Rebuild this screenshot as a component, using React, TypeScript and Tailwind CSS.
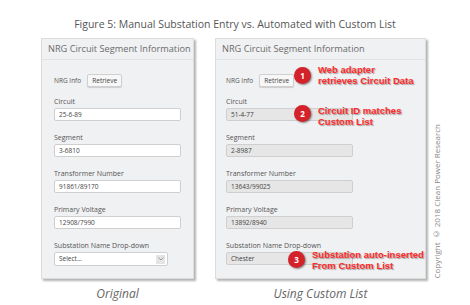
import React from "react";

const font = { fontFamily: '"Open Sans", "Liberation Sans", sans-serif' };

const Field = ({
  label,
  value,
  disabled,
}: {
  label: string;
  value: string;
  disabled?: boolean;
}) => (
  <div>
    <div className="h-[9px] text-[7px] leading-[9px] text-[#555]">{label}</div>
    <div
      className={`mt-[2px] flex h-[13px] w-[127px] items-center rounded-[2px] border border-[#cfcfcf] px-[4px] text-[6.5px] text-[#444] ${
        disabled ? "bg-[#e6e6e6]" : "bg-white"
      }`}
    >
      {value}
    </div>
  </div>
);

const Panel = ({
  width,
  children,
}: {
  width: string;
  children: React.ReactNode;
}) => (
  <div
    className={`relative h-[241px] ${width} border border-[#dcdcdc] bg-[#f0f1f3] shadow-[2px_2px_2px_rgba(0,0,0,0.3)]`}
  >
    <div className="flex h-[21px] items-center whitespace-nowrap border-b border-[#e2e3e5] pl-[6px] text-[9.2px] text-[#6b6b6b]">
      NRG Circuit Segment Information
    </div>
    {children}
  </div>
);

const Badge = ({ n, className }: { n: number; className: string }) => (
  <div
    className={`absolute flex h-[17px] w-[17px] items-center justify-center rounded-full bg-[#d3222a] text-[8px] font-bold text-white shadow-[1px_1px_2px_rgba(0,0,0,0.45)] ${className}`}
  >
    {n}
  </div>
);

const Note = ({ lines, className }: { lines: string[]; className: string }) => (
  <div
    className={`absolute whitespace-nowrap text-[9.5px] font-bold leading-[11px] text-[#ff2a2a] [text-shadow:1px_1px_1px_rgba(0,0,0,0.35)] ${className}`}
    style={{ fontFamily: '"Liberation Sans", Arial, sans-serif' }}
  >
    {lines.map((l) => (
      <div key={l}>{l}</div>
    ))}
  </div>
);

export default function App() {
  return (
    <div className="relative h-[305px] w-[470px] overflow-hidden bg-white" style={font}>
      {/* Title */}
      <div className="pt-[18px] text-center text-[10.5px] leading-[12px] text-[#555]">
        Figure 5: Manual Substation Entry vs. Automated with Custom List
      </div>

      <div className="mt-[8px] flex pl-[41px]">
        {/* Original */}
        <div className="flex flex-col items-center">
          <Panel width="w-[153px]">
            <div className="px-[12px] pt-[14px]">
              <div className="flex items-center gap-[6px]">
                <span className="text-[6.5px] text-[#555]">NRG Info</span>
                <div className="flex h-[13px] items-center rounded-[2px] border border-[#d0d0d0] bg-[#f7f7f7] px-[4px] text-[6.5px] text-[#444] shadow-[0_1px_1px_rgba(0,0,0,0.15)]">
                  Retrieve
                </div>
              </div>
              <div className="mt-[10px] flex flex-col gap-[12px]">
                <Field label="Circuit" value="25-6-89" />
                <Field label="Segment" value="3-6810" />
                <Field label="Transformer Number" value="91861/89170" />
                <Field label="Primary Voltage" value="12908/7990" />
                <div>
                  <div className="h-[9px] text-[7px] leading-[9px] text-[#555]">
                    Substation Name Drop-down
                  </div>
                  <div className="mt-[2px] flex h-[14px] w-[114px] items-center justify-between rounded-[2px] border border-[#cfcfcf] bg-white pl-[4px] pr-[2px] text-[6.5px] text-[#444]">
                    Select...
                    <div className="flex h-[9px] w-[9px] items-center justify-center bg-[#e4e4e4]">
                      <svg width="6" height="4" viewBox="0 0 6 4">
                        <path d="M0.5 0.5 L3 3 L5.5 0.5" fill="none" stroke="#888" strokeWidth="0.8" />
                      </svg>
                    </div>
                  </div>
                </div>
              </div>
            </div>
          </Panel>
          <div className="mt-[8px] text-[12px] italic leading-[14px] text-[#666]">Original</div>
        </div>

        {/* Using Custom List */}
        <div className="ml-[21px] flex flex-col items-center">
          <Panel width="w-[211px]">
            <div className="px-[10px] pt-[14px]">
              <div className="flex items-center gap-[6px]">
                <span className="text-[6.5px] text-[#555]">NRG Info</span>
                <div className="flex h-[13px] items-center rounded-[2px] border border-[#d0d0d0] bg-[#f7f7f7] px-[4px] text-[6.5px] text-[#444] shadow-[0_1px_1px_rgba(0,0,0,0.15)]">
                  Retrieve
                </div>
              </div>
              <div className="mt-[10px] flex flex-col gap-[12px]">
                <Field label="Circuit" value="51-4-77" disabled />
                <Field label="Segment" value="2-8987" disabled />
                <Field label="Transformer Number" value="13643/99025" disabled />
                <Field label="Primary Voltage" value="13892/8940" disabled />
                <Field label="Substation Name Drop-down" value="Chester" disabled />
              </div>
            </div>

            <Badge n={1} className="left-[78px] top-[28px]" />
            <Badge n={2} className="left-[78px] top-[66px]" />
            <Badge n={3} className="left-[72px] top-[212px]" />
            <Note
              lines={["Web adapter", "retrieves Circuit Data"]}
              className="left-[102px] top-[25px]"
            />
            <Note
              lines={["Circuit ID matches", "Custom List"]}
              className="left-[102px] top-[66px]"
            />
            <Note
              lines={["Substation auto-inserted", "From Custom List"]}
              className="left-[96px] top-[210px]"
            />
          </Panel>
          <div className="mt-[8px] text-[12px] italic leading-[14px] text-[#666]">
            Using Custom List
          </div>
        </div>

        {/* Copyright */}
        <div className="ml-[4px] flex h-[241px] w-[14px] items-end justify-center">
          <div className="whitespace-nowrap text-[8px] text-[#888] [writing-mode:vertical-rl] rotate-180">
            Copyright © 2018 Clean Power Research
          </div>
        </div>
      </div>
    </div>
  );
}
